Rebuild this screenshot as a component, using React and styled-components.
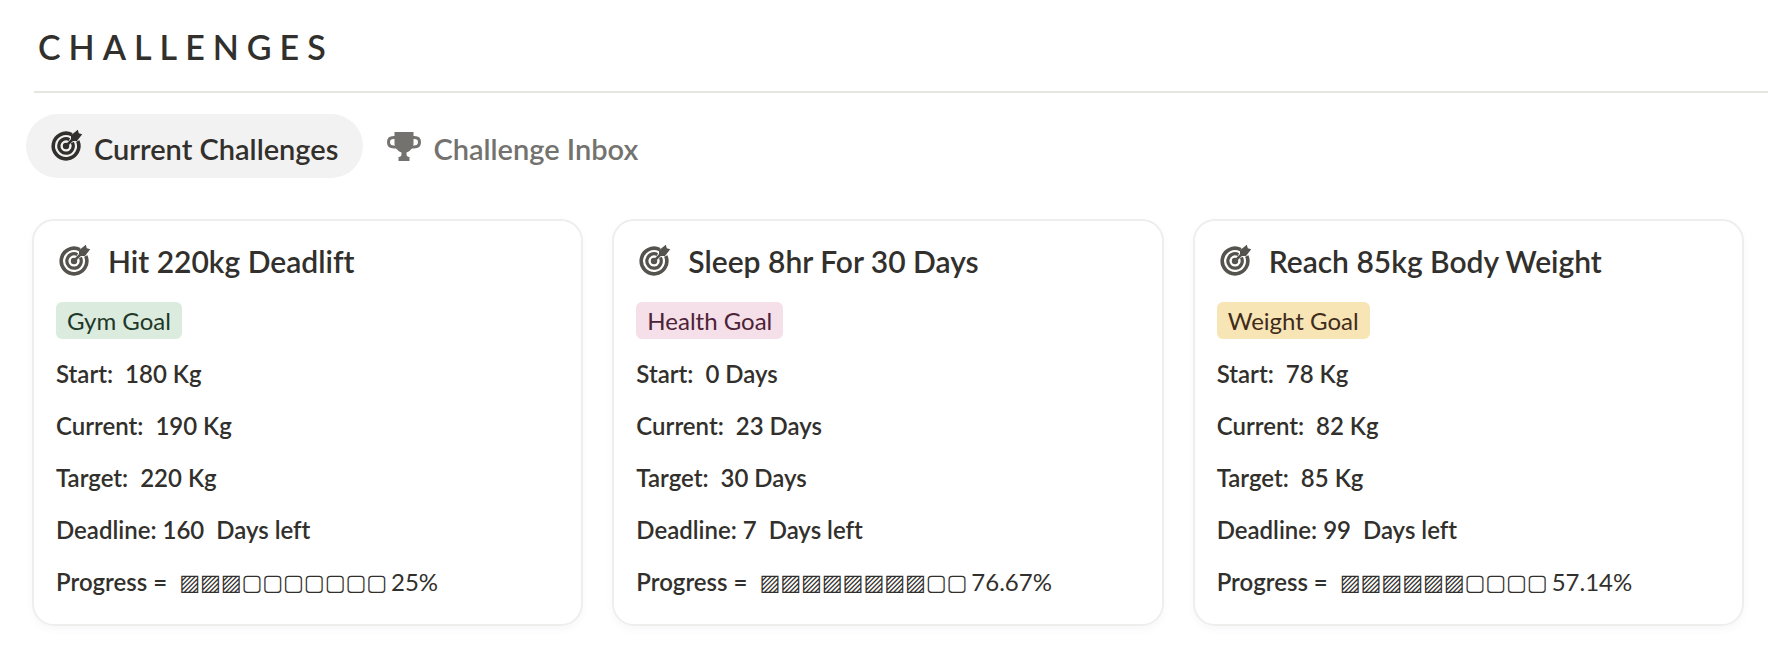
import React, { useState } from "react"
import styled, { createGlobalStyle } from "styled-components"

const challenges = [
  {
    title: "Hit 220kg Deadlift",
    goal: "Gym Goal",
    color: "green",
    start: "180 Kg",
    current: "190 Kg",
    target: "220 Kg",
    deadline: 160,
    filled: 3,
    percent: "25%",
  },
  {
    title: "Sleep 8hr For 30 Days",
    goal: "Health Goal",
    color: "pink",
    start: "0 Days",
    current: "23 Days",
    target: "30 Days",
    deadline: 7,
    filled: 8,
    percent: "76.67%",
  },
  {
    title: "Reach 85kg Body Weight",
    goal: "Weight Goal",
    color: "yellow",
    start: "78 Kg",
    current: "82 Kg",
    target: "85 Kg",
    deadline: 99,
    filled: 6,
    percent: "57.14%",
  },
]

const tagColors = {
  green: { bg: "#dbebdd", text: "#1f3829" },
  pink: { bg: "#f5dfe9", text: "#4c2337" },
  yellow: { bg: "#f8e5b6", text: "#402c1b" },
}

const TargetIcon = () => (
  <Icon viewBox="0 0 32 32" aria-hidden="true">
    <g fill="none" stroke="currentColor">
      <path d="M21.8 4.6A12.8 12.8 0 1 0 27.8 11" strokeWidth="3.6" />
      <path d="M19.4 9.6A7.2 7.2 0 1 0 22.4 12.6" strokeWidth="3.2" />
      <path d="M16 16L24 8" strokeWidth="2.6" strokeLinecap="round" />
    </g>
    <circle cx="16" cy="16" r="3.2" fill="currentColor" />
    <path
      d="M21 11V5.2L27.8 -0.2L28.8 3.2L32.2 4.2L27 11Z"
      fill="currentColor"
    />
  </Icon>
)

const TrophyIcon = () => (
  <Icon viewBox="0 0 34 32" $wide aria-hidden="true">
    <g fill="none" stroke="currentColor" strokeWidth="3">
      <path d="M9 7.5H6.5Q1.5 7.5 1.5 12.2T7 17H10" />
      <path d="M25 7.5H27.5Q32.5 7.5 32.5 12.2T27 17H24" />
    </g>
    <path
      d="M7.5 2H26.5V14Q25.5 20.5 19.5 22.5V24.5Q19.5 26.5 22.5 27V31H11.5V27Q14.5 26.5 14.5 24.5V22.5Q8.5 20.5 7.5 14Z"
      fill="currentColor"
    />
  </Icon>
)

const ChallengeCard = ({ item }) => (
  <Card>
    <CardHeader>
      <TargetIcon />
      <CardTitle>{item.title}</CardTitle>
    </CardHeader>
    <Tag $color={item.color}>{item.goal}</Tag>
    <Details>
      <Detail>{`Start:  ${item.start}`}</Detail>
      <Detail>{`Current:  ${item.current}`}</Detail>
      <Detail>{`Target:  ${item.target}`}</Detail>
      <Detail>{`Deadline: ${item.deadline}  Days left`}</Detail>
      <Detail>
        Progress =
        <Bar>{"▨".repeat(item.filled) + "▢".repeat(10 - item.filled)}</Bar>
        <Percent>{item.percent}</Percent>
      </Detail>
    </Details>
  </Card>
)

const App = () => {
  const [tab, setTab] = useState("current")
  return (
    <Page>
      <GlobalStyle />
      <Title>CHALLENGES</Title>
      <Tabs role="tablist">
        <Tab
          role="tab"
          aria-selected={tab === "current"}
          $active={tab === "current"}
          onClick={() => setTab("current")}
        >
          <TargetIcon />
          <TabLabel>Current Challenges</TabLabel>
        </Tab>
        <Tab
          role="tab"
          aria-selected={tab === "inbox"}
          $active={tab === "inbox"}
          onClick={() => setTab("inbox")}
        >
          <TrophyIcon />
          <TabLabel>Challenge Inbox</TabLabel>
        </Tab>
      </Tabs>
      <Grid>
        {challenges.map((item) => (
          <ChallengeCard item={item} key={item.title} />
        ))}
      </Grid>
    </Page>
  )
}

export default App

const GlobalStyle = createGlobalStyle`
  * {
    box-sizing: border-box;
  }

  body {
    margin: 0;
    background: #fff;
    color: #32302c;
    font-family: Lato, sans-serif;
    font-variant-ligatures: none;
  }
`

const Page = styled.main`
  padding: 23px 0 24px 34px;
`

const Title = styled.h1`
  margin: 0;
  padding: 0 4px 20px;
  border-bottom: 2px solid #e6e5e1;
  font-size: 34px;
  line-height: 48px;
  font-weight: 600;
  letter-spacing: 8px;
`

const Tabs = styled.div`
  display: flex;
  margin: 21px 0 41px -8px;
`

const Tab = styled.button`
  display: flex;
  align-items: center;
  gap: 12px;
  height: 64px;
  padding: 0 25px 0 24px;
  border: 0;
  border-radius: 32px;
  background: ${({ $active }) => ($active ? "#f2f2f2" : "transparent")};
  color: ${({ $active }) => ($active ? "#32302c" : "#74726e")};
  font-family: inherit;
  font-size: 29px;
  font-weight: 600;
  cursor: pointer;
`

const TabLabel = styled.span`
  padding-top: 5px;
  line-height: 34px;
`

const Icon = styled.svg`
  flex: none;
  width: ${({ $wide }) => ($wide ? 34 : 32)}px;
  height: 32px;
  overflow: visible;
`

const Grid = styled.section`
  display: grid;
  grid-template-columns: repeat(3, 1fr);
  gap: 29px;
  margin-left: -2px;
  padding-right: 24px;
`

const Card = styled.article`
  padding: 20px 22px 16px;
  border: 2px solid #eeeeed;
  border-radius: 22px;
  box-shadow: 0 4px 8px rgba(0, 0, 0, 0.03);
`

const CardHeader = styled.header`
  display: flex;
  align-items: center;
  gap: 18px;
  padding-left: 2px;
  color: #55534e;
`

const CardTitle = styled.h2`
  margin: 0;
  color: #32302c;
  font-size: 30px;
  line-height: 40px;
  font-weight: 600;
`

const Tag = styled.span`
  display: inline-block;
  margin-top: 21px;
  padding: 0 11px;
  border-radius: 6px;
  background: ${({ $color }) => tagColors[$color].bg};
  color: ${({ $color }) => tagColors[$color].text};
  font-size: 24px;
  line-height: 37px;
`

const Details = styled.div`
  margin-top: 9px;
`

const Detail = styled.p`
  margin: 0;
  font-size: 24px;
  line-height: 52px;
  font-weight: 600;
  white-space: pre;
`

const Bar = styled.span`
  margin: 0 4px 0 12px;
  font-family: "DejaVu Sans", sans-serif;
  font-size: 22px;
  line-height: 1;
  font-weight: 400;
  vertical-align: 1px;
`

const Percent = styled.span`
  font-weight: 400;
`
